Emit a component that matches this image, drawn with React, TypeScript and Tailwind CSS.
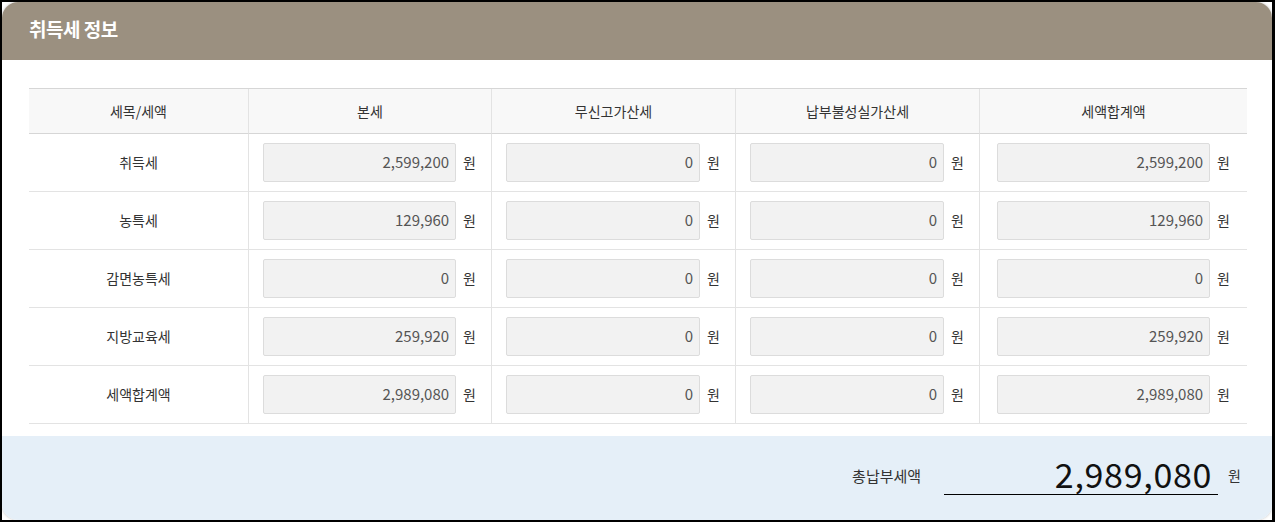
import React from "react";

const font = { fontFamily: '"Noto Sans CJK KR", "Noto Sans", sans-serif' };

type Row = { label: string; values: string[] };

const rows: Row[] = [
  { label: "취득세", values: ["2,599,200", "0", "0", "2,599,200"] },
  { label: "농특세", values: ["129,960", "0", "0", "129,960"] },
  { label: "감면농특세", values: ["0", "0", "0", "0"] },
  { label: "지방교육세", values: ["259,920", "0", "0", "259,920"] },
  { label: "세액합계액", values: ["2,989,080", "0", "0", "2,989,080"] },
];

const headers = ["세목/세액", "본세", "무신고가산세", "납부불성실가산세", "세액합계액"];

function AmountCell({ value, last }: { value: string; last?: boolean }) {
  return (
    <div
      className={`h-[58px] flex items-center gap-[7px] border-l border-b border-[#e3e3e3] ${
        last ? "pl-[17px] pr-[17px]" : "pl-[14px] pr-[15px]"
      }`}
    >
      <div className="flex-1 h-[39px] rounded-[2px] border border-[#dcdcdc] bg-[#f2f2f2] flex items-center justify-end pr-[6px] text-[15px] text-[#555]">
        {value}
      </div>
      <span className="text-[14px] text-[#333]">원</span>
    </div>
  );
}

export default function App() {
  return (
    <div
      className="w-[1275px] h-[522px] bg-white border-t-2 border-l-2 border-b-2 border-r-[3px] border-black overflow-hidden"
      style={font}
    >
      <div className="h-full rounded-[16px] overflow-hidden bg-white flex flex-col shadow-[0_0_3px_rgba(0,0,0,0.25)]">
        {/* Title bar */}
        <div className="h-[58px] bg-[#9b9080] flex items-center pl-[27px] pb-[3px] shrink-0">
          <h2 className="text-white text-[19px] font-bold tracking-[-0.5px]">취득세 정보</h2>
        </div>

        {/* Table */}
        <div className="pt-[28px] pl-[27px] pr-[25px]">
          <div className="grid grid-cols-[219px_243px_244px_244px_1fr] border-t border-[#d6d6d6]">
            {headers.map((h, i) => (
              <div
                key={h}
                className={`h-[45px] flex items-center justify-center bg-[#f8f8f8] border-b border-[#d6d6d6] text-[14px] text-[#333] ${
                  i > 0 ? "border-l border-l-[#e3e3e3]" : ""
                }`}
              >
                {h}
              </div>
            ))}
            {rows.map((r) => (
              <React.Fragment key={r.label}>
                <div className="h-[58px] flex items-center justify-center text-[14px] text-[#333] border-b border-[#e3e3e3]">
                  {r.label}
                </div>
                {r.values.map((v, j) => (
                  <AmountCell key={j} value={v} last={j === 3} />
                ))}
              </React.Fragment>
            ))}
          </div>
        </div>

        {/* Total */}
        <div className="mt-[12px] flex-1 bg-[#e5eff8] flex items-center justify-end pr-[31px] pb-[6px]">
          <span className="text-[15px] text-[#333] mr-[23px] mt-[2px]">총납부세액</span>
          <div className="w-[274px] border-b border-black text-right pr-[6px] text-[34px] leading-[40px] text-[#111] tracking-[0.7px] mt-[-2px]">
            2,989,080
          </div>
          <span className="ml-[10px] text-[14px] text-[#333]">원</span>
        </div>
      </div>
    </div>
  );
}
